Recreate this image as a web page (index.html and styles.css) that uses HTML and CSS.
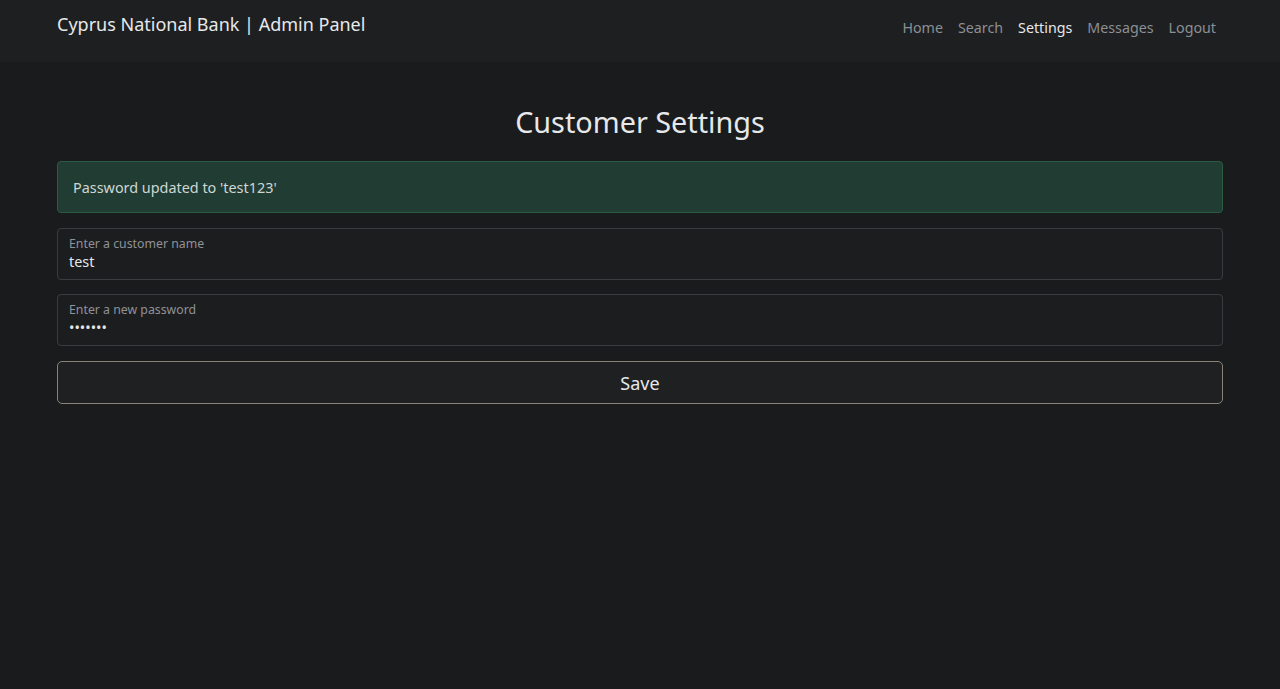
FILE: index.html
```html
<!DOCTYPE html>
<html lang="en">
<head>
<meta charset="utf-8">
<title>Customer Settings</title>
<link rel="stylesheet" href="styles.css">
</head>
<body>
<header class="navbar">
  <div class="brand">Cyprus National Bank | Admin Panel</div>
  <nav class="nav">
    <a class="nav-link" href="#">Home</a>
    <a class="nav-link" href="#">Search</a>
    <a class="nav-link active" href="#">Settings</a>
    <a class="nav-link" href="#">Messages</a>
    <a class="nav-link" href="#">Logout</a>
  </nav>
</header>
<main class="content">
  <h1 class="title">Customer Settings</h1>
  <div class="alert">Password updated to 'test123'</div>
  <div class="field">
    <label class="field-label">Enter a customer name</label>
    <div class="field-value">test</div>
  </div>
  <div class="field">
    <label class="field-label">Enter a new password</label>
    <div class="field-value dots">&bull;&bull;&bull;&bull;&bull;&bull;&bull;</div>
  </div>
  <button class="save">Save</button>
</main>
</body>
</html>
```
FILE: styles.css
```css
* { box-sizing: border-box; }
html, body {
  margin: 0;
  padding: 0;
  background: #1a1b1d;
  color: #dee2e6;
  font-family: "Noto Sans", "Open Sans", sans-serif;
}
.navbar {
  height: 62px;
  background: #1e1f21;
  display: flex;
  justify-content: space-between;
  align-items: flex-start;
  padding: 0 57px;
}
.brand {
  font-size: 18px;
  color: #e6e8ea;
  margin-top: 10px;
  line-height: 28px;
}
.nav {
  display: flex;
  gap: 15px;
  margin-top: 17px;
  margin-right: 7px;
}
.nav-link {
  font-size: 14.25px;
  line-height: 22px;
  color: #8c8f93;
  text-decoration: none;
}
.nav-link.active { color: #e6e8ea; }
.content {
  padding: 0 57px;
  display: flex;
  flex-direction: column;
}
.title {
  font-weight: 400;
  font-size: 28.8px;
  line-height: 40px;
  text-align: center;
  color: #e6e8ea;
  margin: 40px 0 19px;
}
.alert {
  height: 52px;
  background: #213d33;
  border: 1px solid #2d5a44;
  border-radius: 4px;
  color: #cfd6d3;
  font-size: 14.4px;
  padding: 0 15px;
  display: flex;
  align-items: center;
  margin-bottom: 15px;
}
.field {
  height: 52px;
  border: 1px solid #3a3c3f;
  border-radius: 4px;
  background: #1c1d1f;
  padding: 7px 11px 0;
  margin-bottom: 14px;
  display: flex;
  flex-direction: column;
}
.field-label {
  font-size: 12.3px;
  line-height: 16px;
  color: #8f9297;
}
.field-value {
  font-size: 14.4px;
  line-height: 19px;
  color: #e6e8ea;
}
.dots { font-size: 14.4px; }
.save {
  height: 43px;
  margin-top: 1px;
  width: 100%;
  background: #1f2022;
  border: 1px solid #8a8276;
  border-radius: 5px;
  color: #e6e8ea;
  font-family: inherit;
  font-size: 18px;
}
```
